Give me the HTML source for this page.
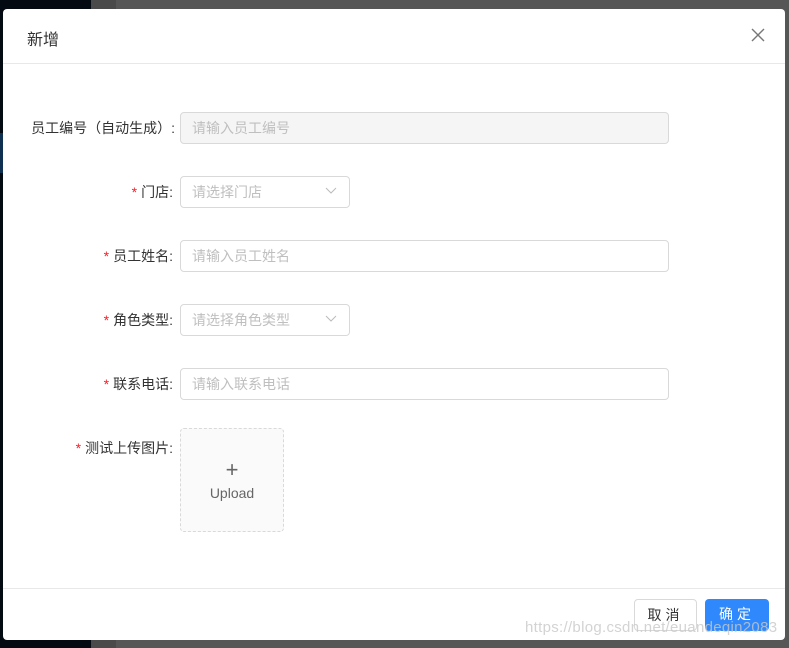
<!DOCTYPE html>
<html><head><meta charset="utf-8"><style>
*{box-sizing:border-box;margin:0;padding:0}
body{width:789px;height:648px;overflow:hidden;background:#565656;font-family:"Liberation Sans","Noto Sans CJK SC",sans-serif;position:relative}
.l1{position:absolute;left:0;top:0;width:91px;height:648px;background:#030a12}
.l2{position:absolute;left:91px;top:0;width:25px;height:648px;background:#4a4a4a}
.blue{position:absolute;left:0;top:133px;width:4px;height:40px;background:#0f3050}
.m{position:absolute;left:3px;top:9px;width:782px;height:631px;background:#fff;border-radius:4px}
.hd{height:55px;border-bottom:1px solid #e8e8e8;padding:17px 0 0 24px;font-size:16px;color:#333}
.x{position:absolute;right:20px;top:19px}
.row{position:absolute;left:0;font-size:14px;color:#333;display:flex;align-items:center}
.lab{width:177px;text-align:right;padding-right:7px}
.lab b{color:#f5222d;font-weight:normal;margin-right:4px;font-family:"Liberation Sans",sans-serif}
.in{height:32px;border:1px solid #d9d9d9;border-radius:4px;padding-left:11px;color:#bfbfbf;font-size:14px;line-height:30px;position:relative}
.ft{position:absolute;left:0;right:0;top:579px;border-top:1px solid #e8e8e8}
.btn{position:absolute;top:590px;height:32px;border-radius:4px;font-size:14px;line-height:30px;text-align:center;letter-spacing:4px}
.arr{position:absolute;right:12px;top:10px}
</style></head><body>
<div class="l1"></div><div class="l2"></div><div class="blue"></div>
<div class="m">
<div class="hd">新增</div>
<svg class="x" width="14" height="14" viewBox="0 0 14 14"><path d="M1 1L13 13M13 1L1 13" stroke="#777" stroke-width="1.4"/></svg>
<div class="row" style="top:103px"><div class="lab" style="padding-right:5px">员工编号（自动生成）:</div><div class="in" style="width:489px;background:#f5f5f5">请输入员工编号</div></div>
<div class="row" style="top:167px"><div class="lab"><b>*</b>门店:</div><div class="in" style="width:170px">请选择门店<svg class="arr" width="12" height="8" viewBox="0 0 12 8"><path d="M1 1L6 6L11 1" stroke="#bbb" fill="none"/></svg></div></div>
<div class="row" style="top:231px"><div class="lab"><b>*</b>员工姓名:</div><div class="in" style="width:489px">请输入员工姓名</div></div>
<div class="row" style="top:295px"><div class="lab"><b>*</b>角色类型:</div><div class="in" style="width:170px">请选择角色类型<svg class="arr" width="12" height="8" viewBox="0 0 12 8"><path d="M1 1L6 6L11 1" stroke="#bbb" fill="none"/></svg></div></div>
<div class="row" style="top:359px"><div class="lab"><b>*</b>联系电话:</div><div class="in" style="width:489px">请输入联系电话</div></div>
<div class="row" style="top:428px;align-items:flex-start"><div class="lab" style="line-height:22px"><b>*</b>测试上传图片:</div></div>
<div style="position:absolute;left:177px;top:419px;width:104px;height:104px;border:1px dashed #d9d9d9;border-radius:4px;background:#fafafa;text-align:center;color:#666;font-size:14px">
<div style="font-size:22px;margin-top:30px;line-height:22px">+</div><div style="margin-top:4px">Upload</div></div>
<div class="ft"></div>
<div class="btn" style="left:631px;width:63px;border:1px solid #d9d9d9;color:#333">取消</div>
<div class="btn" style="left:702px;width:64px;background:#2f89fc;color:#fff">确定</div>
<div style="position:absolute;left:522px;top:610px;font-size:15px;color:rgba(200,200,200,.8);letter-spacing:0.3px">https://blog.csdn.net/euandeqin2083</div>
</div>
</body></html>
